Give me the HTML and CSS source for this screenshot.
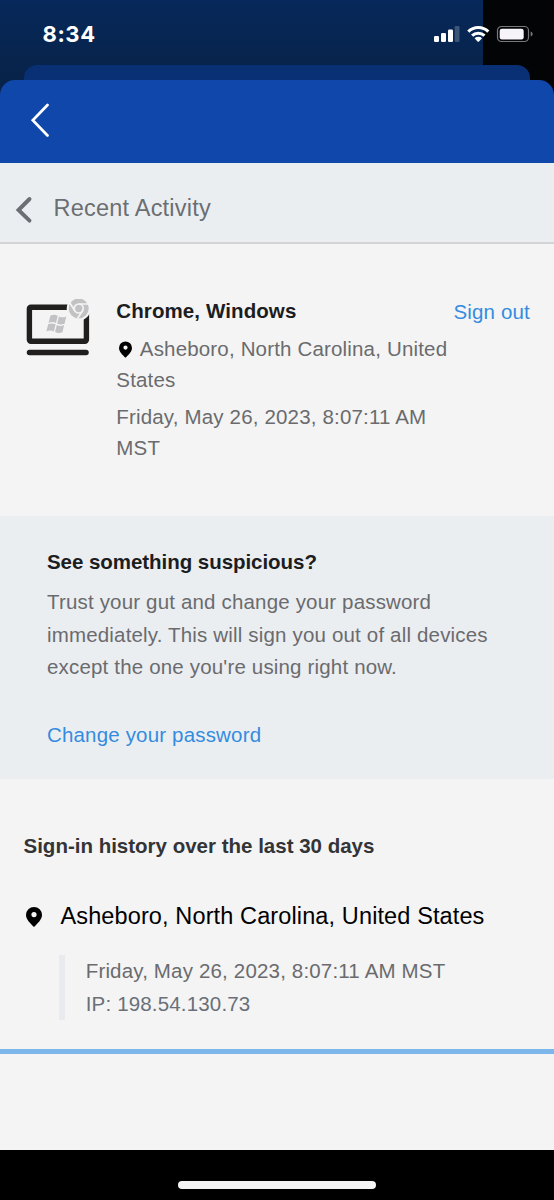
FILE: index.html
```html
<!DOCTYPE html>
<html lang="en">
<head>
<meta charset="utf-8">
<title>Recent Activity</title>
<link rel="stylesheet" href="styles.css">
</head>
<body>
<div class="phone">
  <header class="status-bar">
    <span class="clock">8:34</span>
    <svg class="status-icons" width="100" height="20" viewBox="0 0 100 20">
      <g fill="#fff">
        <rect x="0" y="12" width="5" height="6" rx="1.2"/>
        <rect x="7" y="9" width="5" height="9" rx="1.2"/>
        <rect x="14" y="5.500" width="5" height="12.500" rx="1.2"/>
        <rect x="20.700" y="2" width="4.800" height="16" rx="1.200" opacity=".22"/>
      </g>
      <g fill="none" stroke="#fff" stroke-width="3.100">
        <path d="M34.300 7.600a14.300 14.300 0 0 1 20 0"/>
        <path d="M38.100 11.700a9 9 0 0 1 12.400 0"/>
      </g>
      <path d="M40.600 14.300a5.400 5.400 0 0 1 7.400 0l-2.800 3a1.300 1.300 0 0 1-1.900 0z" fill="#fff"/>
      <rect x="63.500" y="2.500" width="31" height="15" rx="4" fill="none" stroke="#77797b" stroke-width="1.200"/>
      <rect x="65.700" y="4.700" width="24" height="10.800" rx="2.200" fill="#f6f4f8"/>
      <path d="M96.700 7.500q2 .7 2 2.500t-2 2.500z" fill="#77797b"/>
    </svg>
  </header>
  <div class="back-sheet"></div>
  <main class="sheet">
    <div class="app-bar">
      <svg width="20" height="34" viewBox="0 0 20 34"><path d="M17.500 2 2.800 17.300 17.500 32.500" fill="none" stroke="#fff" stroke-width="2.700" stroke-linecap="round"/></svg>
    </div>
    <nav class="page-nav">
      <svg width="18" height="28" viewBox="0 0 18 28"><path d="M14.500 3 3.500 14 14.500 24.700" fill="none" stroke="#6b6e73" stroke-width="3.900" stroke-linecap="round"/></svg>
      <span>Recent Activity</span>
    </nav>
    <section class="device">
      <svg class="device-icon" width="66" height="60" viewBox="0 0 66 60">
        <rect x="3.400" y="8.300" width="57" height="34" rx="1.500" fill="none" stroke="#211e1e" stroke-width="5.400"/>
        <path d="M3.500 53.600h56.500" stroke="#211e1e" stroke-width="5.500" stroke-linecap="round"/>
        <g fill="#c2c2c4" transform="translate(2 0) scale(.92 .96)">
          <path d="M24.300 17.400q4-2 8 0l-1.900 7.500q-4-2-8.100 0z"/>
          <path d="M33.600 18.100q4 2 8 .1l-1.900 7.500q-4 1.800-8-.2z"/>
          <path d="M21.900 26.400q4-2 8.100 0l-1.900 7.500q-4-2-8.100 0z"/>
          <path d="M31.300 27q4 2 8 .1l-1.900 7.500q-4 1.800-8-.2z"/>
        </g>
        <g transform="translate(-.6 -.5)">
          <circle cx="53.300" cy="10" r="12" fill="#f4f4f4"/>
          <circle cx="53.300" cy="10" r="10" fill="#c2c2c4"/>
          <circle cx="53.300" cy="10" r="4.500" fill="none" stroke="#f4f4f4" stroke-width="1.700"/>
          <path d="M53.300 5.500h9.700M49.400 12.300 44.300 4.200M57.200 12.300 52 20" stroke="#f4f4f4" stroke-width="1.700"/>
        </g>
      </svg>
      <div class="device-info">
        <h2>Chrome, Windows</h2>
        <p class="place"><svg class="pin" width="13" height="17" viewBox="0 0 16 20"><path d="M8 0a8 8 0 0 0-8 8c0 4.500 4.500 8.500 8 12 3.500-3.500 8-7.500 8-12a8 8 0 0 0-8-8zm0 5a2.600 2.600 0 1 1 0 5.200A2.600 2.600 0 0 1 8 5z"/></svg>Asheboro, North Carolina, United<br>States</p>
        <p class="time">Friday, May 26, 2023, 8:07:11 AM<br>MST</p>
      </div>
      <a class="sign-out">Sign out</a>
    </section>
    <section class="warning">
      <h2>See something suspicious?</h2>
      <p>Trust your gut and change your password<br>immediately. This will sign you out of all devices<br>except the one you're using right now.</p>
      <a>Change your password</a>
    </section>
    <section class="history">
      <h2>Sign-in history over the last 30 days</h2>
      <div class="history-place">
        <svg width="16" height="20" viewBox="0 0 16 20"><path d="M8 0a8 8 0 0 0-8 8c0 4.500 4.500 8.500 8 12 3.500-3.500 8-7.500 8-12a8 8 0 0 0-8-8zm0 5a2.600 2.600 0 1 1 0 5.200A2.600 2.600 0 0 1 8 5z"/></svg>
        <span>Asheboro, North Carolina, United States</span>
      </div>
      <div class="entry">
        <p>Friday, May 26, 2023, 8:07:11 AM MST</p>
        <p class="ip">IP: 198.54.130.73</p>
      </div>
      <div class="divider"></div>
    </section>
  </main>
  <footer class="home-area"><div class="home-bar"></div></footer>
</div>
</body>
</html>
```

FILE: styles.css
```css
* { box-sizing: border-box; }
body { margin: 0; }
h2, p { margin: 0; }
svg { display: block; flex: none; }

.phone {
  width: 554px;
  height: 1200px;
  overflow: hidden;
  display: flex;
  flex-direction: column;
  background: linear-gradient(90deg, transparent 483px, #020406 483px), linear-gradient(#06285a, #082349 80px);
  font-family: "Liberation Sans", Arial, sans-serif;
  font-size: 20.5px;
  line-height: 32.5px;
  letter-spacing: .17px;
  color: #6a6b6e;
  white-space: nowrap;
}

.status-bar {
  height: 65px;
  flex: none;
  display: flex;
  justify-content: space-between;
  padding: 18px 20px 0 42.500px;
}
.clock {
  font: 700 22px/32px Inter, sans-serif;
  letter-spacing: .6px;
  color: #fff;
}
.status-icons { margin-top: 6px; }

.back-sheet {
  height: 15px;
  flex: none;
  margin: 0 24px;
  border-radius: 13px 13px 0 0;
  background: #092f75;
}

.sheet {
  height: 1069.500px;
  flex: none;
  background: linear-gradient(transparent 80px, #f4f4f4 80px);
}
.app-bar {
  height: 82.500px;
  padding: 23px 0 0 30px;
  border-radius: 15px 15px 0 0;
  background: #1047ab;
}
.page-nav {
  height: 81px;
  display: flex;
  align-items: center;
  gap: 20.500px;
  padding: 14px 15px 0;
  background: #ebeef1;
  border-bottom: 2px solid #d2d4d6;
  font-size: 23.5px;
  letter-spacing: .22px;
  color: #6b6e73;
}
.page-nav svg { margin-top: 2px; }
.page-nav span { margin-top: -2px; }

.device {
  height: 272.500px;
  display: flex;
  padding: 51px 24px 0 26px;
  line-height: 31px;
}
.device-icon { margin-top: 4px; }
.device-info { margin-left: 24.300px; flex: 1; }
h2 {
  font-size: 20.5px;
  font-weight: 700;
  line-height: inherit;
  letter-spacing: .1px;
  color: #1c1d20;
}
.place { margin-top: 7px; }
.time { margin-top: 6px; }
.pin {
  display: inline-block;
  margin: 0 8px 0 2.500px;
  vertical-align: -2px;
}
a { color: #348ce0; }
.sign-out { margin-top: 1px; }

.warning {
  height: 263px;
  padding: 30px 47px 0;
  background: #ebeef1;
}
.warning h2 { letter-spacing: -.05px; }
.warning p { margin: 7.500px 0 35px; }

.history { padding-top: 51px; }
.history h2 {
  padding-left: 23.500px;
  line-height: 32px;
  letter-spacing: 0;
  color: #333437;
}
.history-place {
  display: flex;
  align-items: center;
  gap: 18.500px;
  margin-top: 38px;
  padding-left: 26px;
  font-size: 23.5px;
  line-height: 32px;
  letter-spacing: .12px;
  color: #000;
}
.history-place svg { margin-top: 1px; }
.entry {
  margin: 23px 0 0 59px;
  padding-left: 20.700px;
  border-left: 6px solid #e8eaed;
}
.ip { color: #697079; }
.divider {
  height: 4.500px;
  margin-top: 29px;
  background: #7db6ea;
}

.home-area {
  flex: 1;
  display: flex;
  justify-content: center;
  padding-top: 31px;
  background: #000;
}
.home-bar {
  width: 198px;
  height: 8px;
  border-radius: 4px;
  background: #f5f5f5;
}
```
